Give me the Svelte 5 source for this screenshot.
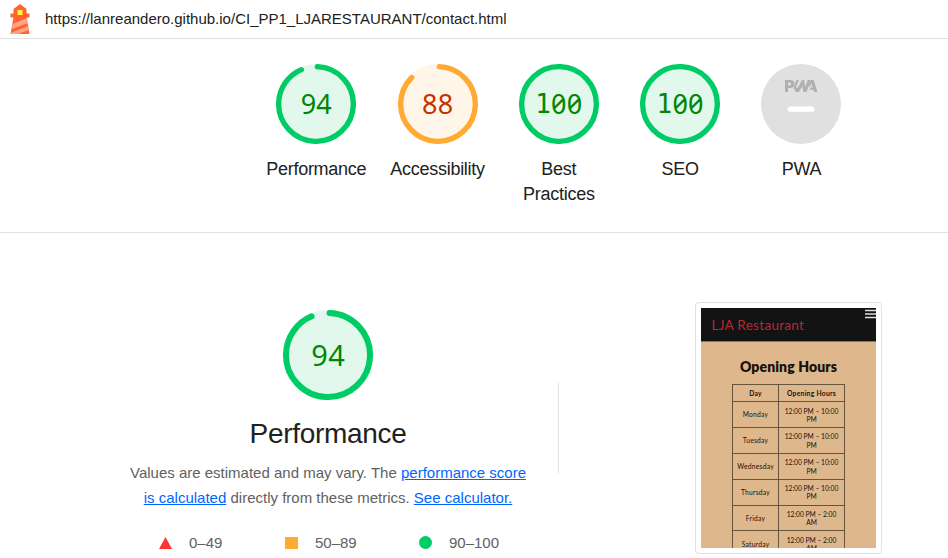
<script>
  const gauges = [
    { score: 94, label: 'Performance', tone: 'pass' },
    { score: 88, label: 'Accessibility', tone: 'average' },
    { score: 100, label: 'Best Practices', tone: 'pass' },
    { score: 100, label: 'SEO', tone: 'pass' }
  ];
  const circumference = 2 * Math.PI * 56;
  const arc = (score) =>
    score === 100 ? circumference : (score / 100) * circumference - 4;
  const hours = [
    ['Monday', '12:00 PM – 10:00', 'PM'],
    ['Tuesday', '12:00 PM – 10:00', 'PM'],
    ['Wednesday', '12:00 PM – 10:00', 'PM'],
    ['Thursday', '12:00 PM – 10:00', 'PM'],
    ['Friday', '12:00 PM – 2:00', 'AM'],
    ['Saturday', '12:00 PM – 2:00', 'AM']
  ];
</script>

{#snippet dial(score, tone)}
  <div class="dial {tone}">
    <svg viewBox="0 0 120 120">
      <circle class="base" cx="60" cy="60" r="60" />
      <circle
        class="arc"
        cx="60"
        cy="60"
        r="56"
        transform="rotate(-87.95 60 60)"
        stroke-dasharray="{arc(score)} {circumference}"
      />
    </svg>
    <div class="score">{#each String(score) as digit}<span class:one={digit === '1'}>{digit}</span>{/each}</div>
  </div>
{/snippet}

<div class="page">
  <header>
    <svg class="logo" width="20" height="30" viewBox="0 0 20 30">
      <path d="M10 0 16.500 5v4.500h3v4h-3L19.500 30H.5L3.500 13.500h-3v-4h3V5Z" fill="#ff6333" />
      <path d="M2.700 20 17.200 14l.7 5L1.500 25.200Z M1 28.700 18.500 22l.8 4-11.500 4H.5Z" fill="#ffa385" />
      <path d="M7.500 6h5v5h-5z" fill="#fff22e" />
    </svg>
    <span class="url">https://lanreandero.github.io/CI_PP1_LJARESTAURANT/contact.html</span>
  </header>

  <section class="summary">
    {#each gauges as g}
      <div class="gauge">
        {@render dial(g.score, g.tone)}
        <div class="label">{g.label}</div>
      </div>
    {/each}
    <div class="gauge">
      <svg class="pwa" width="80" height="80" viewBox="0 0 80 80">
        <circle cx="40" cy="40" r="40" fill="#e0e0e0" />
        <g fill="#b0b0b0">
          <path fill-rule="evenodd" d="M24 16h5q4.500 0 4.500 4t-4.500 4h-2v4h-3Zm3 2.500v3h1.500q1.700 0 1.700-1.500t-1.700-1.500Z" />
          <path d="M35.300 16h2.500l-3 7.500 2 .2L41 16h2.200l1 7.300 2.600-7.300H50l-4.600 12h-3l-1-6-3.400 6h-3.200l-2-4Z" />
          <path d="M49.800 16h2.900l3.700 12h-3.200l-.7-2.200h-3.800l.8-2.200h2.200l-1.100-4.200-1.600 3.300-1.100-.2Z" />
        </g>
        <rect x="26.500" y="42.500" width="27" height="5.300" rx="2.650" fill="#fff" />
      </svg>
      <div class="label">PWA</div>
    </div>
  </section>

  <section class="category">
    <div class="overview">
      <div class="large">{@render dial(94, 'pass')}</div>
      <h1>Performance</h1>
      <p>
        Values are estimated and may vary. The <a href="#score">performance score<br />is calculated</a>
        directly from these metrics. <a href="#calc">See calculator.</a>
      </p>
      <div class="scale">
        <span class="range fail"><svg width="13" height="12"><path d="M6.500 0 13 12H0Z" fill="#f33" /></svg>0–49</span>
        <span class="range mid"><svg width="13" height="12"><path d="M0 0h13v12H0Z" fill="#fa3" /></svg>50–89</span>
        <span class="range good"><svg width="13" height="13"><circle cx="6.500" cy="6.500" r="6.500" fill="#0c6" /></svg>90–100</span>
      </div>
    </div>
    <div class="divider"></div>
    <div class="shot">
      <div class="screen">
        <div class="nav">
          <span class="brand">LJA Restaurant</span>
          <svg width="11" height="10"><path d="M0 1.500h11M0 5h11M0 8.500h11" stroke="#ddd" stroke-width="1.700" /></svg>
        </div>
        <h2>Opening Hours</h2>
        <div class="table">
          <div class="row head"><b>Day</b><b>Opening Hours</b></div>
          {#each hours as [day, line, end]}
            <div class="row"><span>{day}</span><span>{line}<br />{end}</span></div>
          {/each}
        </div>
      </div>
    </div>
  </section>
</div>

<style>
  :global(body) { margin: 0; background: #fff; }
  .page {
    width: 948px; height: 558px; overflow: hidden;
    font-family: "Liberation Sans", Arial, sans-serif; color: #212121;
  }
  header {
    box-sizing: border-box; height: 39px; border-bottom: 1px solid #e0e0e0;
    display: flex; align-items: flex-start; padding: 4px 0 0 10px;
  }
  .logo { flex: none; margin-right: 15px; }
  .url { font-size: 15px; line-height: 30px; white-space: nowrap; }
  .summary {
    box-sizing: border-box; height: 194px; border-bottom: 1px solid #e0e0e0;
    display: flex; padding: 25px 0 0 255.600px;
  }
  .gauge { width: 121.300px; display: flex; flex-direction: column; align-items: center; }
  .label { width: 100px; margin-top: 13px; font-size: 18px; line-height: 25px; letter-spacing: -0.270px; text-align: center; display: flex; justify-content: center; }
  .pwa { display: block; }
  .dial { width: 80px; height: 80px; display: grid; }
  .dial svg { grid-area: 1 / 1; width: 100%; height: 100%; display: block; }
  .base { fill: #e3f8ed; }
  .arc { fill: none; stroke: #0c6; stroke-width: 8; stroke-linecap: round; }
  .score {
    grid-area: 1 / 1; place-self: center; display: flex; color: #080;
    font: 27px/36px "Noto Sans", sans-serif; font-feature-settings: "zero";
  }
  .score span { width: 15.700px; text-align: center; }
  .score .one { font-family: "DejaVu Sans Mono", monospace; font-size: 26px; }
  .average .base { fill: #fff5e8; }
  .average .arc { stroke: #fa3; }
  .average .score { color: #c33300; }
  .category { display: flex; height: 325px; }
  .overview { width: 400px; margin-left: 128px; padding-top: 77px; display: flex; flex-direction: column; align-items: center; }
  .large .dial { width: 90px; height: 90px; }
  .large .score { font-size: 29px; }
  .large .score span { width: 17px; }
  h1 { margin: 14px 0 0; font-size: 28px; line-height: 40px; font-weight: 400; letter-spacing: -0.300px; }
  p { margin: 6px 0 0; font-size: 15px; line-height: 25px; color: #616161; text-align: center; }
  a { color: #06f; text-decoration: underline; }
  .scale { align-self: stretch; display: flex; margin-top: 20px; padding-left: 31px; font-size: 15px; line-height: 25px; color: #616161; }
  .range { display: flex; align-items: center; gap: 17px; }
  .fail { width: 126px; }
  .mid { width: 134px; }
  .divider { width: 1px; height: 90px; margin: 150px 0 0 30px; background: #e0e0e0; }
  .shot {
    box-sizing: border-box; width: 187px; height: 252px; margin: 69px 0 0 136px; padding: 5px;
    border: 1px solid #e0e0e0; border-radius: 4px;
  }
  .screen { width: 175px; height: 240px; overflow: hidden; background: #deb88c; color: #17120d; font-family: Lato, sans-serif; }
  .nav { height: 34px; background: #131313; display: flex; justify-content: space-between; border-bottom: 1px solid #8b7359; box-sizing: border-box; }
  .nav svg { margin-top: 1px; }
  .brand { color: #bc2830; font-size: 13.500px; line-height: 35px; padding-left: 10.500px; letter-spacing: 0.300px; }
  h2 { margin: 15px 0 0; font-size: 14px; font-weight: 800; line-height: 20px; letter-spacing: 0.120px; text-align: center; }
  .table { width: 113px; margin: 7px 0 0 31px; border: solid #665640; border-width: 1px 0 0 1px; box-sizing: border-box; }
  .row { display: flex; height: 25.900px; font-size: 6.700px; line-height: 8.300px; }
  .row > * { box-sizing: border-box; border: solid #665640; border-width: 0 1px 1px 0; display: flex; align-items: center; justify-content: center; text-align: center; white-space: nowrap; }
  .row > :first-child { width: 46px; letter-spacing: 0.250px; }
  .row > :last-child { width: 66px; display: block; padding-top: 4.500px; }
  .row.head { height: 17px; }
  .row.head > :last-child { padding-top: 4px; letter-spacing: 0.300px; }
</style>
